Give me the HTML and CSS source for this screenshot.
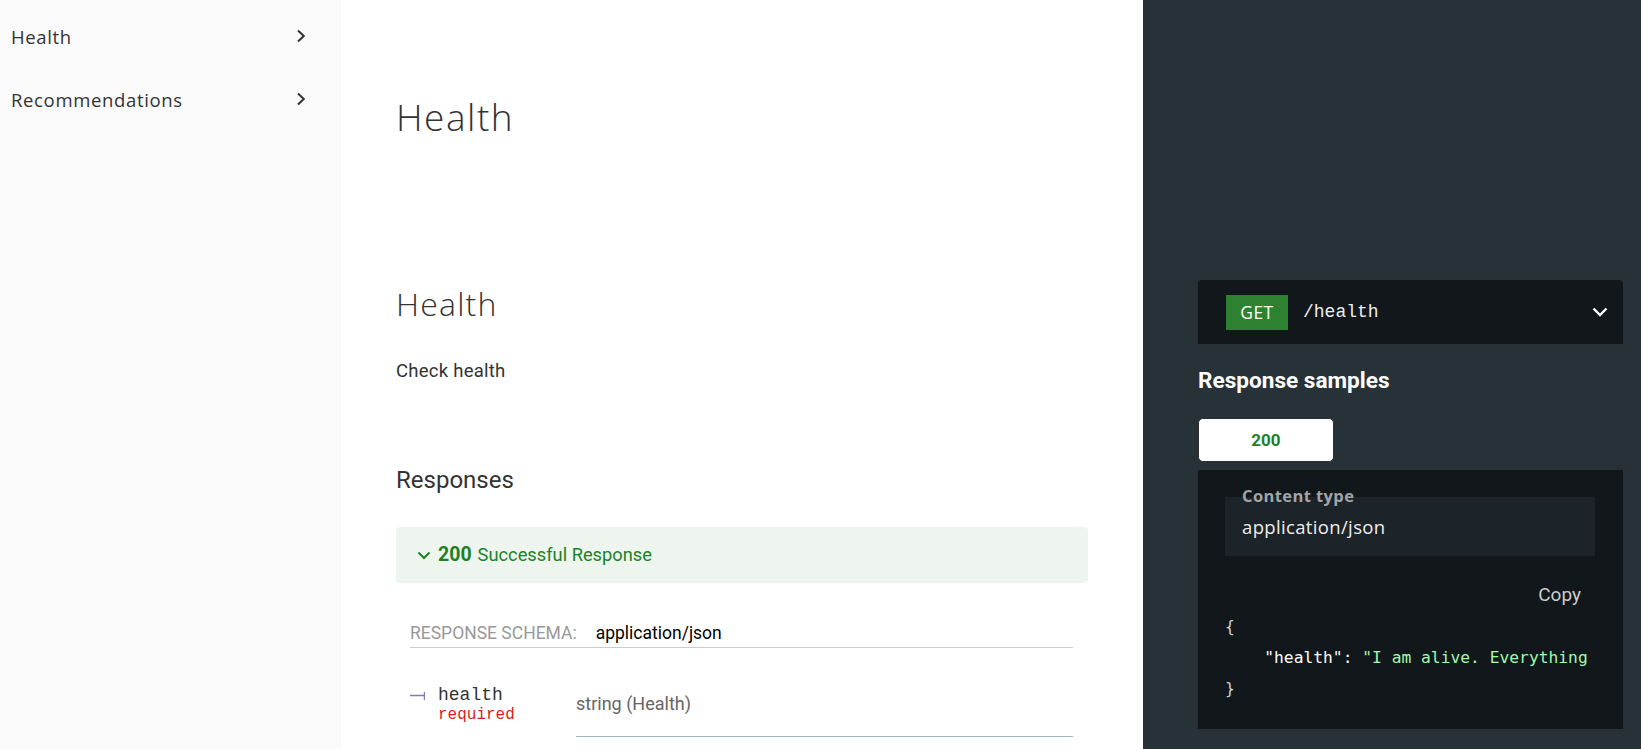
FILE: index.html
```html
<!DOCTYPE html>
<html lang="en">
<head>
<meta charset="utf-8">
<title>Health</title>
<link rel="stylesheet" href="styles.css">
</head>
<body>
<div class="page">
  <nav class="sidebar">
    <div class="nav-item">
      <span class="nav-label">Health</span>
      <svg class="nav-chevron" width="10" height="14" viewBox="0 0 10 14"><path d="M2 1.5 L7.8 7 L2 12.5" fill="none" stroke="#333" stroke-width="2"/></svg>
    </div>
    <div class="nav-item">
      <span class="nav-label">Recommendations</span>
      <svg class="nav-chevron" width="10" height="14" viewBox="0 0 10 14"><path d="M2 1.5 L7.8 7 L2 12.5" fill="none" stroke="#333" stroke-width="2"/></svg>
    </div>
  </nav>

  <main class="middle">
    <h1 class="tag-title">Health</h1>
    <h2 class="op-title">Health</h2>
    <p class="op-desc">Check health</p>
    <h3 class="resp-title">Responses</h3>
    <div class="resp-head">
      <svg class="resp-chevron" width="14" height="9" viewBox="0 0 14 9"><path d="M1.5 1.5 L7 7 L12.5 1.5" fill="none" stroke="#1d8127" stroke-width="2"/></svg>
      <span class="resp-code">200</span>
      <span class="resp-text">Successful Response</span>
    </div>
    <div class="schema-row">
      <span class="schema-label">RESPONSE SCHEMA:</span>
      <span class="schema-type">application/json</span>
    </div>
    <div class="prop-row">
      <div class="prop-name">
        <div class="prop-name-line">
          <svg class="prop-bullet" width="15" height="8" viewBox="0 0 15 8"><path d="M0 3.5 H14 M14.5 0 V8" fill="none" stroke="#7c7cbb" stroke-width="1.5"/></svg>
          <span class="prop-key">health</span>
        </div>
        <div class="prop-required">required</div>
      </div>
      <div class="prop-detail">
        <span class="prop-type">string (Health)</span>
      </div>
    </div>
  </main>

  <aside class="right">
    <div class="endpoint">
      <span class="method">GET</span>
      <span class="path">/health</span>
      <svg class="endpoint-chevron" width="16" height="10" viewBox="0 0 16 10"><path d="M1.5 1.5 L8 8 L14.5 1.5" fill="none" stroke="#fff" stroke-width="2.4"/></svg>
    </div>
    <h3 class="samples-title">Response samples</h3>
    <div class="tabs">
      <div class="tab">200</div>
    </div>
    <div class="code-panel">
      <div class="ctype">
        <span class="ctype-label">Content type</span>
        <span class="ctype-value">application/json</span>
      </div>
      <div class="copy-row"><span class="copy">Copy</span></div>
      <pre class="code"><span class="punct">{</span>
    <span class="key">"health"</span><span class="colon">: </span><span class="str">"I am alive. Everything is fine."</span>
<span class="punct">}</span></pre>
    </div>
  </aside>
</div>
</body>
</html>
```

FILE: styles.css
```css
html, body {
  margin: 0;
  padding: 0;
  height: 100%;
  overflow: hidden;
  background: #fff;
}

.page {
  display: flex;
  height: 749px;
  font-family: Roboto, "Liberation Sans", sans-serif;
}

/* Sidebar */
.sidebar {
  width: 341px;
  flex: none;
  background: #fafafa;
  padding-top: 5px;
  box-sizing: border-box;
}
.nav-item {
  height: 63px;
  display: flex;
  align-items: center;
  justify-content: space-between;
  padding: 0 35px 0 11px;
}
.nav-label {
  font-family: "Open Sans", sans-serif;
  font-size: 18.5px;
  line-height: 24px;
  letter-spacing: 0.65px;
  color: #333;
}
.nav-chevron {
  display: block;
  margin-top: -2px;
}

/* Middle */
.middle {
  width: 802px;
  flex: none;
  box-sizing: border-box;
  padding: 0 55px;
  color: #333;
}
.tag-title {
  margin: 95px 0 0;
  font-family: "Open Sans", sans-serif;
  font-weight: 300;
  font-size: 37px;
  line-height: 44px;
  letter-spacing: 1.5px;
  color: #333;
}
.op-title {
  margin: 145px 0 0;
  font-family: "Open Sans", sans-serif;
  font-weight: 300;
  font-size: 32px;
  line-height: 40px;
  letter-spacing: 1.2px;
  color: #333;
}
.op-desc {
  margin: 34px 0 0;
  font-size: 18.5px;
  line-height: 26px;
  letter-spacing: 0.25px;
}
.resp-title {
  margin: 80px 0 0;
  font-weight: 400;
  font-size: 24px;
  line-height: 32px;
  color: #333;
}
.resp-head {
  margin-top: 31px;
  height: 56px;
  background: #eef5ef;
  border-radius: 4px;
  display: flex;
  align-items: center;
  padding-left: 21px;
  color: #1d8127;
}
.resp-chevron {
  display: block;
  margin-right: 7px;
}
.resp-code {
  font-weight: 700;
  font-size: 19.5px;
  line-height: 24px;
  margin-right: 6px;
}
.resp-text {
  font-size: 18.3px;
  line-height: 24px;
}
.schema-row {
  margin: 38px 15px 0 14px;
  padding-bottom: 2px;
  border-bottom: 1px solid #ccc;
  display: flex;
  font-size: 17.5px;
  line-height: 24px;
}
.schema-label {
  color: #999;
  margin-right: 19px;
}
.schema-type {
  color: #000;
}
.prop-row {
  margin: 24px 15px 0 14px;
  display: flex;
}
.prop-name {
  width: 166px;
  flex: none;
  padding-top: 12px;
}
.prop-name-line {
  display: flex;
  align-items: center;
}
.prop-bullet {
  display: block;
  margin-right: 13px;
  margin-top: 1px;
}
.prop-key {
  font-family: "Liberation Mono", monospace;
  font-size: 18px;
  line-height: 22px;
  color: #333;
}
.prop-required {
  font-family: "Liberation Mono", monospace;
  font-size: 16px;
  line-height: 19px;
  color: #d41f1c;
  padding-left: 28px;
}
.prop-detail {
  flex: 1;
  padding: 19px 0 19px;
  border-bottom: 1px solid #9fb4be;
}
.prop-type {
  font-size: 18px;
  line-height: 26px;
  color: #666;
}

/* Right panel */
.right {
  flex: 1;
  background: #263238;
  padding: 280px 18px 0 55px;
  box-sizing: border-box;
  min-width: 0;
}
.endpoint {
  height: 64px;
  background: #11171a;
  border-radius: 4px 4px 0 0;
  display: flex;
  align-items: center;
  padding: 0 15px 0 28px;
}
.method {
  width: 62px;
  height: 35px;
  background: #2f8132;
  color: #fff;
  font-family: "Open Sans", sans-serif;
  font-size: 17.5px;
  letter-spacing: 0.4px;
  display: flex;
  align-items: center;
  justify-content: center;
  margin-right: 15px;
}
.path {
  flex: 1;
  font-family: "Liberation Mono", monospace;
  font-size: 18px;
  color: #eee;
}
.endpoint-chevron {
  display: block;
}
.samples-title {
  margin: 23px 0 0;
  font-weight: 700;
  font-size: 22.6px;
  line-height: 28px;
  color: #fff;
}
.tabs {
  margin-top: 23px;
  display: flex;
}
.tab {
  width: 136px;
  height: 44px;
  box-sizing: border-box;
  background: #fff;
  border: 1px solid #2b2f31;
  border-radius: 5px;
  color: #1d8127;
  font-weight: 700;
  font-size: 17px;
  display: flex;
  align-items: center;
  justify-content: center;
}
.code-panel {
  margin-top: 8px;
  height: 259px;
  box-sizing: border-box;
  background: #11171a;
  padding: 27px 28px 0 27px;
  overflow: hidden;
}
.ctype {
  position: relative;
  background: #1c2429;
  height: 59px;
  box-sizing: border-box;
  padding: 18px 17px 0;
}
.ctype-label {
  position: absolute;
  left: 17px;
  top: -11px;
  font-family: "Open Sans", sans-serif;
  font-weight: 700;
  font-size: 16.5px;
  line-height: 20px;
  letter-spacing: 0.4px;
  color: #a2a5a8;
}
.ctype-value {
  display: block;
  font-family: "Open Sans", sans-serif;
  font-size: 18.5px;
  line-height: 24px;
  letter-spacing: 0.35px;
  color: #eee;
}
.copy-row {
  display: flex;
  justify-content: flex-end;
  margin-top: 27px;
  padding-right: 14px;
}
.copy {
  font-size: 19px;
  line-height: 24px;
  color: #ccc;
}
.code {
  margin: 4px 0 0;
  font-family: "DejaVu Sans Mono", monospace;
  font-size: 16.3px;
  line-height: 31px;
  color: #fff;
  overflow: hidden;
  white-space: pre;
}
.punct {
  color: #d0d0d0;
}
.key {
  color: #fff;
}
.colon {
  color: #fff;
}
.str {
  color: #a0fbaa;
}
```
